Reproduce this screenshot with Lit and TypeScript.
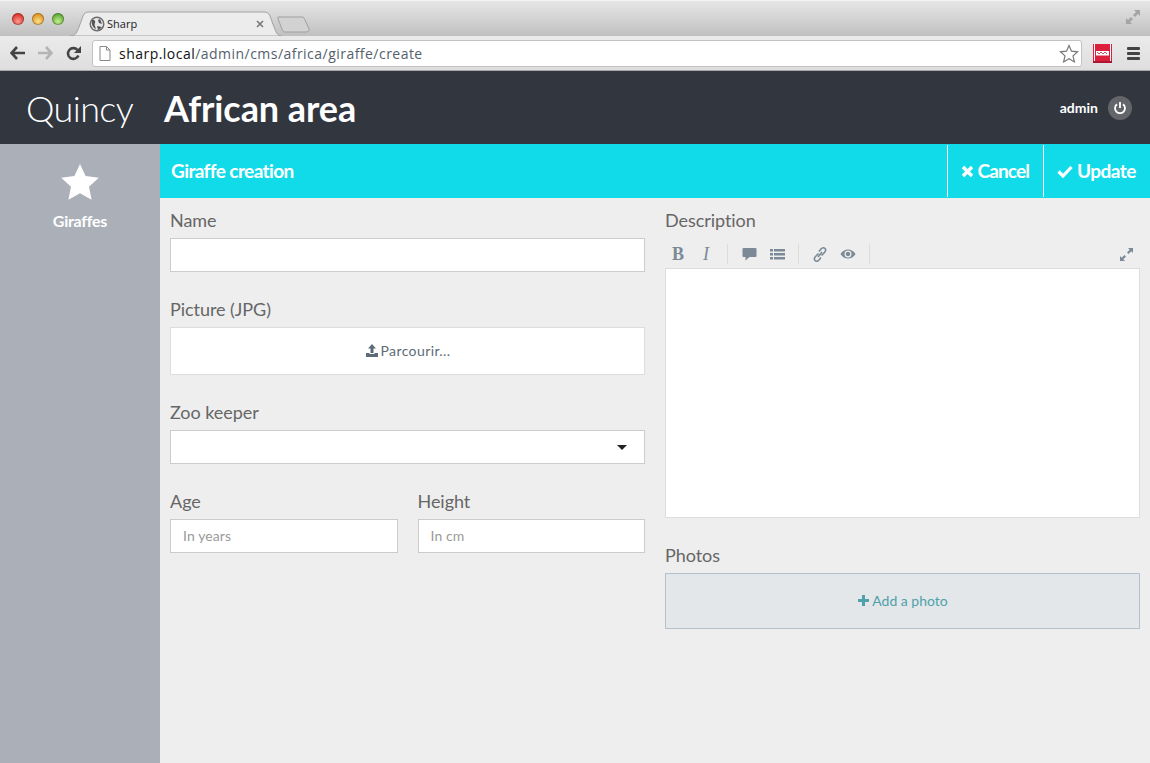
import { LitElement, html, css } from 'lit';
import { customElement } from 'lit/decorators.js';

@customElement('app-root')
class AppRoot extends LitElement {
    static styles = css`
        :host {
            display: flex;
            flex-direction: column;
            height: 763px;
            overflow: hidden;
            font-family: Lato, sans-serif;
            background: #eeeeee;
        }

        svg {
            display: block;
            flex: none;
        }

        /* browser window */
        .tabstrip {
            height: 36px;
            display: flex;
            align-items: flex-end;
            background: linear-gradient(#e6e6e6, #c0c0c0);
            border-top: 1px solid #f2f2f2;
            box-sizing: border-box;
            position: relative;
        }

        .lights {
            display: flex;
            gap: 8px;
            padding: 0 0 11px 12px;
            width: 54px;
        }

        .light {
            width: 12px;
            height: 12px;
            border-radius: 50%;
            box-shadow: inset 0 0 0 1px rgba(0, 0, 0, 0.25);
        }

        .red {
            background: radial-gradient(circle at 50% 70%, #ff9a8f, #d8342c 70%);
        }

        .yellow {
            background: radial-gradient(circle at 50% 70%, #ffdf8a, #dc9420 70%);
        }

        .green {
            background: radial-gradient(circle at 50% 70%, #c3f08c, #5fa83a 70%);
        }

        .tab {
            position: relative;
            width: 212px;
            height: 25px;
            margin-left: 4px;
            display: flex;
            align-items: center;
            box-sizing: border-box;
            padding: 0 0 0 19px;
            color: #222;
        }

        .tab-shape {
            position: absolute;
            left: 0;
            top: 0;
        }

        .favicon,
        .tab-title,
        .tab-close {
            position: relative;
        }

        .tab-title {
            margin-left: 2px;
            flex: 1;
            font-family: 'Open Sans', sans-serif;
            font-size: 11px;
        }

        .tab-close {
            margin-right: 18px;
        }

        .new-tab {
            margin: 0 0 3px -5px;
        }

        .fullscreen {
            position: absolute;
            right: 9px;
            top: 8px;
        }

        .toolbar {
            height: 35px;
            display: flex;
            align-items: center;
            box-sizing: border-box;
            background: linear-gradient(#ebebeb, #dedede);
            border-bottom: 1px solid #a8a8a8;
            padding: 0 10px;
        }

        .nav {
            display: flex;
            gap: 13px;
            width: 82px;
        }

        .omnibox {
            flex: 1;
            height: 27px;
            box-sizing: border-box;
            display: flex;
            align-items: center;
            background: #fff;
            border: 1px solid #c2c2c2;
            border-radius: 3px;
            padding: 0 2px 0 6px;
            font: 14px 'Open Sans', sans-serif;
            color: #54616d;
        }

        .omnibox b {
            font-weight: 400;
            color: #111;
        }

        .url {
            flex: 1;
            margin-left: 8px;
            letter-spacing: 0.47px;
        }

        .addon {
            margin-left: 11px;
        }

        .menu {
            margin-left: 15px;
        }

        /* app */
        .topbar {
            height: 73px;
            flex: none;
            display: flex;
            align-items: center;
            background: #31363f;
            color: #fff;
            padding: 0 18px 0 26px;
        }

        .brand {
            font-size: 36px;
            font-weight: 300;
            width: 138px;
            letter-spacing: -0.6px;
        }

        .area {
            font-size: 36px;
            font-weight: 700;
            flex: 1;
            letter-spacing: -0.08px;
        }

        .user {
            font-size: 14px;
            font-weight: 700;
            margin-right: 10px;
        }

        .power {
            width: 24px;
            height: 24px;
            border-radius: 50%;
            background: #63656a;
            display: flex;
            align-items: center;
            justify-content: center;
        }

        .body {
            flex: 1;
            display: flex;
        }

        .sidebar {
            width: 160px;
            flex: none;
            background: #abb0b8;
            color: #fff;
            display: flex;
            flex-direction: column;
            align-items: center;
            padding-top: 20px;
            box-sizing: border-box;
            font-size: 16px;
            font-weight: 700;
            letter-spacing: -0.25px;
        }

        .sidebar svg {
            margin-bottom: 11px;
        }

        .main {
            flex: 1;
            min-width: 0;
        }

        .actionbar {
            height: 54px;
            display: flex;
            align-items: stretch;
            background: #11dbe9;
            color: #fff;
            font-weight: 700;
            font-size: 19px;
            letter-spacing: -0.6px;
        }

        .heading {
            flex: 1;
            padding-left: 11px;
            align-self: center;
            margin-top: -2px;
        }

        .action {
            display: flex;
            align-items: center;
            gap: 4px;
            margin: 1px 0;
            border-left: 1px solid #fff;
            padding: 0 14px 0 13px;
        }

        .action span {
            margin-top: -2px;
        }

        .cancel {
            letter-spacing: -0.9px;
        }

        .update {
            letter-spacing: -0.5px;
        }

        .form {
            display: grid;
            grid-template-columns: 1fr 1fr;
            gap: 20px;
            padding: 0 10px;
        }

        .label {
            display: block;
            font-size: 18px;
            line-height: 22px;
            color: #666;
            letter-spacing: -0.05px;
            margin-bottom: 7px;
        }

        .field {
            margin-bottom: 26px;
        }

        .first {
            padding-top: 11px;
        }

        .input {
            height: 34px;
            box-sizing: border-box;
            background: #fff;
            border: 1px solid #ccc;
            display: flex;
            align-items: center;
            padding: 0 12px 2px;
            font-size: 14px;
            color: #9a9a9a;
            letter-spacing: 0.1px;
        }

        .upload {
            height: 48px;
            background: #fff;
            border: 1px solid #ddd;
            box-sizing: border-box;
            display: flex;
            align-items: center;
            justify-content: center;
            gap: 2px;
            padding-bottom: 2px;
            font-size: 14px;
            letter-spacing: 0.4px;
            color: #5d6b78;
        }

        .select {
            justify-content: flex-end;
            padding: 0 17px 0 0;
        }

        .caret {
            width: 0;
            height: 0;
            border-left: 5px solid transparent;
            border-right: 5px solid transparent;
            border-top: 5px solid #222;
        }

        .pair {
            display: grid;
            grid-template-columns: 1fr 1fr;
            gap: 20px;
        }

        .tools {
            height: 30px;
            box-sizing: border-box;
            display: flex;
            align-items: center;
            margin-left: -1px;
            padding-top: 2px;
            color: #7b8a96;
        }

        .group {
            display: flex;
            align-items: center;
            height: 20px;
            padding-right: 7px;
            margin-right: 7px;
            border-right: 1px solid #dcdcdc;
        }

        .tool {
            width: 28px;
            display: flex;
            justify-content: center;
        }

        .tool-b,
        .tool-i {
            font: 400 18px 'Liberation Serif', serif;
        }

        .tool-b {
            font-weight: 700;
        }

        .tool-i {
            font-style: italic;
        }

        .expand {
            margin: 0 6px 0 auto;
        }

        .editor {
            height: 250px;
            box-sizing: border-box;
            background: #fff;
            border: 1px solid #ddd;
        }

        .photos {
            height: 56px;
            box-sizing: border-box;
            background: #e3e7ea;
            border: 1px solid #b4c1cb;
            display: flex;
            align-items: center;
            justify-content: center;
            gap: 3px;
            padding: 0 0 2px 1px;
            font-size: 14px;
            color: #4fa1ab;
        }
    `;

    render() {
        return html`
            <div class="tabstrip">
                <div class="lights">
                    <span class="light red"></span>
                    <span class="light yellow"></span>
                    <span class="light green"></span>
                </div>
                <div class="tab">
                    <svg class="tab-shape" width="212" height="25" viewBox="0 0 212 25">
                        <path d="M0 25C6 25 7 21 9 16L13 5C14 2 16 1 19 1H194C197 1 199 2 200 5L204 16C206 21 207 25 212 25Z" fill="#ececec" stroke="#a2a2a2" />
                    </svg>
                    <svg class="favicon" width="16" height="16" viewBox="0 0 16 16">
                        <circle cx="8" cy="8" r="7.5" fill="#6d6d6d" />
                        <circle cx="8" cy="8" r="6" fill="#e8e8e8" />
                        <path d="M3 4C5 3 7 5 6 7 5 8 6 10 7 13 4 12 2 8 3 4ZM9 4 11 3 13 8 10 7ZM8 10 13 11 11 13 9 14Z" fill="#555" />
                    </svg>
                    <span class="tab-title">Sharp</span>
                    <svg class="tab-close" width="8" height="8" viewBox="0 0 8 8">
                        <path d="M1 1 7 7M7 1 1 7" stroke="#777" stroke-width="1.6" />
                    </svg>
                </div>
                <svg class="new-tab" width="33" height="17" viewBox="0 0 33 17">
                    <path d="M1 1H25C27 1 27 2 28 4L32 13C32 15 31 16 29 16H8C6 16 6 15 5 13L1 3Z" fill="#d2d2d2" stroke="#a0a0a0" />
                </svg>
                <svg class="fullscreen" width="16" height="16" viewBox="0 0 16 16" fill="#a4a4a4">
                    <path d="M9 1H15V7L13 5 10 8 8 6 11 3ZM1 15V9L3 11 6 8 8 10 5 13 7 15Z" />
                </svg>
            </div>
            <div class="toolbar">
                <div class="nav">
                    <svg width="15" height="14" viewBox="0 0 15 14">
                        <path d="M7 1 1.5 7 7 13M2 7H15" fill="none" stroke="#444" stroke-width="2.6" />
                    </svg>
                    <svg width="15" height="14" viewBox="0 0 15 14">
                        <path d="M8 1 13.5 7 8 13M13 7H0" fill="none" stroke="#b4b4b4" stroke-width="2.6" />
                    </svg>
                    <svg width="15" height="15" viewBox="0 0 15 15">
                        <path d="M12.4 9.5A5.4 5.4 0 1 1 11.5 4" fill="none" stroke="#444" stroke-width="2.6" />
                        <path d="M15 0V7H8Z" fill="#444" />
                    </svg>
                </div>
                <div class="omnibox">
                    <svg width="12" height="15" viewBox="0 0 12 15">
                        <path d="M1 .5H7.5L11 4V14.5H1ZM7.5 .5V4H11" fill="#fff" stroke="#888" />
                    </svg>
                    <span class="url"><b>sharp.local</b>/admin/cms/africa/giraffe/create</span>
                    <svg width="20" height="19" viewBox="0 0 20 19">
                        <path d="M10 1.5 12.5 7.2 18.6 7.8 14 11.9 15.4 17.9 10 14.8 4.6 17.9 6 11.9 1.4 7.8 7.5 7.2Z" fill="#fff" stroke="#777" stroke-width="1.2" />
                    </svg>
                </div>
                <svg class="addon" width="19" height="19" viewBox="0 0 19 19">
                    <rect width="19" height="19" fill="#dc1f3c" />
                    <path d="M1.5 0V19M17.5 0V19" stroke="#fff" />
                    <path d="M3 7H16V11.5H3Z" fill="#fff" />
                    <path d="M4 8 6 10 8 8 10 10 12 8 14 10" fill="none" stroke="#c8506a" />
                    <rect y="17" width="19" height="2" fill="#b01530" />
                </svg>
                <svg class="menu" width="13" height="14" viewBox="0 0 13 14" fill="#444">
                    <rect y="1" width="13" height="3" rx="1" />
                    <rect y="6" width="13" height="3" rx="1" />
                    <rect y="11" width="13" height="3" rx="1" />
                </svg>
            </div>

            <header class="topbar">
                <div class="brand">Quincy</div>
                <div class="area">African area</div>
                <div class="user">admin</div>
                <div class="power">
                    <svg width="14" height="14" viewBox="0 0 14 14" fill="none" stroke="#fff" stroke-width="1.8">
                        <path d="M4 3.2A5 5 0 1 0 10 3.2M7 1V7" />
                    </svg>
                </div>
            </header>

            <div class="body">
                <nav class="sidebar">
                    <svg width="38" height="36" viewBox="0 0 38 36" fill="#fff">
                        <path d="M19 0 24.6 12.1 37.8 13.7 28 22.7 30.6 35.8 19 29.3 7.4 35.8 10 22.7.2 13.7 13.4 12.1Z" />
                    </svg>
                    Giraffes
                </nav>
                <main class="main">
                    <div class="actionbar">
                        <div class="heading">Giraffe creation</div>
                        <div class="action cancel">
                            <svg width="13" height="13" viewBox="0 0 13 13">
                                <path d="M2 2 11 11M11 2 2 11" stroke="#fff" stroke-width="3.4" />
                            </svg>
                            <span>Cancel</span>
                        </div>
                        <div class="action update">
                            <svg width="16" height="13" viewBox="0 0 16 13">
                                <path d="M1.5 6.5 6 11 14.5 2" fill="none" stroke="#fff" stroke-width="3.2" />
                            </svg>
                            <span>Update</span>
                        </div>
                    </div>
                    <div class="form">
                        <section>
                            <div class="field first">
                                <span class="label">Name</span>
                                <div class="input"></div>
                            </div>
                            <div class="field">
                                <span class="label">Picture (JPG)</span>
                                <div class="upload">
                                    <svg width="14" height="13" viewBox="0 0 14 13" fill="#5d6b78">
                                        <path d="M7 0 11 4.5H8.5V9H5.5V4.5H3ZM1 9H4.5V10H9.5V9H13V13H1Z" />
                                    </svg>
                                    Parcourir...
                                </div>
                            </div>
                            <div class="field">
                                <span class="label">Zoo keeper</span>
                                <div class="input select"><span class="caret"></span></div>
                            </div>
                            <div class="pair">
                                <div>
                                    <span class="label">Age</span>
                                    <div class="input">In years</div>
                                </div>
                                <div>
                                    <span class="label">Height</span>
                                    <div class="input">In cm</div>
                                </div>
                            </div>
                        </section>
                        <section>
                            <div class="field first">
                                <span class="label">Description</span>
                                <div class="tools">
                                    <div class="group">
                                        <span class="tool tool-b">B</span>
                                        <span class="tool tool-i">I</span>
                                    </div>
                                    <div class="group">
                                        <span class="tool">
                                            <svg width="15" height="14" viewBox="0 0 15 14" fill="#7b8a96">
                                                <path d="M1.5 1H13.5Q14.5 1 14.5 2V9Q14.5 10 13.5 10H7.5L3.5 13.5V10H1.5Q.5 10 .5 9V2Q.5 1 1.5 1Z" />
                                            </svg>
                                        </span>
                                        <span class="tool">
                                            <svg width="15" height="13" viewBox="0 0 15 13" fill="#7b8a96">
                                                <path d="M0 1H3V3.5H0ZM4 1H15V3.5H4ZM0 5H3V7.5H0ZM4 5H15V7.5H4ZM0 9H3V11.5H0ZM4 9H15V11.5H4Z" />
                                            </svg>
                                        </span>
                                    </div>
                                    <div class="group">
                                        <span class="tool">
                                            <svg width="14" height="15" viewBox="0 0 14 15" fill="none" stroke="#7b8a96" stroke-width="1.6">
                                                <path d="M5.5 6.5 3 9C1 11 1 12.5 2 13.5S4.5 14.5 6 13L8 10.5M8.5 8.5 11 6C13 4 13 2.5 12 1.5S9.5.5 8 2L6 4.5M5 10 9 5" />
                                            </svg>
                                        </span>
                                        <span class="tool">
                                            <svg width="16" height="12" viewBox="0 0 16 12">
                                                <path d="M.5 6C4 0 12 0 15.5 6 12 12 4 12 .5 6Z" fill="#7b8a96" />
                                                <circle cx="8" cy="6" r="3.5" fill="#eee" />
                                                <circle cx="8" cy="6" r="2.2" fill="#7b8a96" />
                                            </svg>
                                        </span>
                                    </div>
                                    <svg class="expand" width="15" height="15" viewBox="0 0 15 15" fill="#7b8a96">
                                        <path d="M9 1H14V6L12.3 4.3 9.5 7 8 5.5 10.7 2.7ZM1 14V9L2.7 10.700 5.5 8 7 9.500 4.3 12.300 6 14Z" />
                                    </svg>
                                </div>
                                <div class="editor"></div>
                            </div>
                            <div>
                                <span class="label">Photos</span>
                                <div class="photos">
                                    <svg width="11" height="11" viewBox="0 0 11 11" fill="#4fa1ab">
                                        <path d="M4 0H7V4H11V7H7V11H4V7H0V4H4Z" />
                                    </svg>
                                    Add a photo
                                </div>
                            </div>
                        </section>
                    </div>
                </main>
            </div>
        `;
    }
}

declare global {
    interface HTMLElementTagNameMap {
        'app-root': AppRoot;
    }
}
